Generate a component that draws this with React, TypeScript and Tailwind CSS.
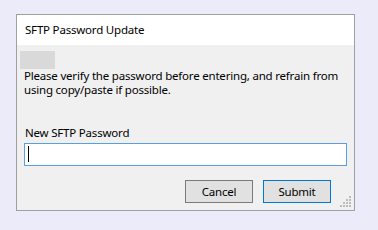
import React from 'react';

const font = { fontFamily: '"Noto Sans", "Liberation Sans", sans-serif' };

function Grip() {
  // little dotted triangle in the bottom right corner of the window
  const dots: [number, number][] = [];
  for (let r = 0; r < 4; r++) {
    for (let c = 3 - r; c < 4; c++) dots.push([c * 3, r * 3]);
  }
  return (
    <svg width="12" height="12" viewBox="0 0 12 12" className="absolute bottom-[2px] right-[2px]">
      {dots.map(([x, y]) => (
        <rect key={`${x}-${y}`} x={x} y={y} width="2" height="2" fill="#bcbcbc" />
      ))}
    </svg>
  );
}

export default function App() {
  return (
    <div
      className="h-[230px] w-[378px] bg-[#ebebfa] pl-[16px] pt-[14px] text-[11.5px] tracking-[-0.2px] text-black"
      style={font}
    >
      <div className="relative h-[197px] w-[339px] border border-[#a0a0a0] bg-[#f0f0f0]">
        <div className="flex h-[30px] items-center bg-white pl-[8px]">SFTP Password Update</div>

        <div className="ml-[3px] mt-[6px] h-[18px] w-[35px] bg-[#d9d9d9]" />

        <p className="pl-[7px] pr-[4px] leading-[14px]">
          Please verify the password before entering, and refrain from using copy/paste if possible.
        </p>

        <div className="mt-[29px] pl-[8px] leading-[14px]">New SFTP Password</div>

        <div className="relative ml-[7px] mt-[3px] h-[23px] w-[323px] border border-[#5a9fe0] bg-white">
          <div className="absolute left-[3px] top-[2px] h-[16px] w-[1px] bg-black" />
        </div>

        <div className="mr-[23px] mt-[14px] flex justify-end gap-[10px]">
          <button className="h-[23px] w-[68px] border border-[#7a7a7a] bg-[#e1e1e1]">Cancel</button>
          <button className="h-[23px] w-[68px] border border-[#0078d7] bg-[#e1e1e1]">Submit</button>
        </div>

        <Grip />
      </div>
    </div>
  );
}
